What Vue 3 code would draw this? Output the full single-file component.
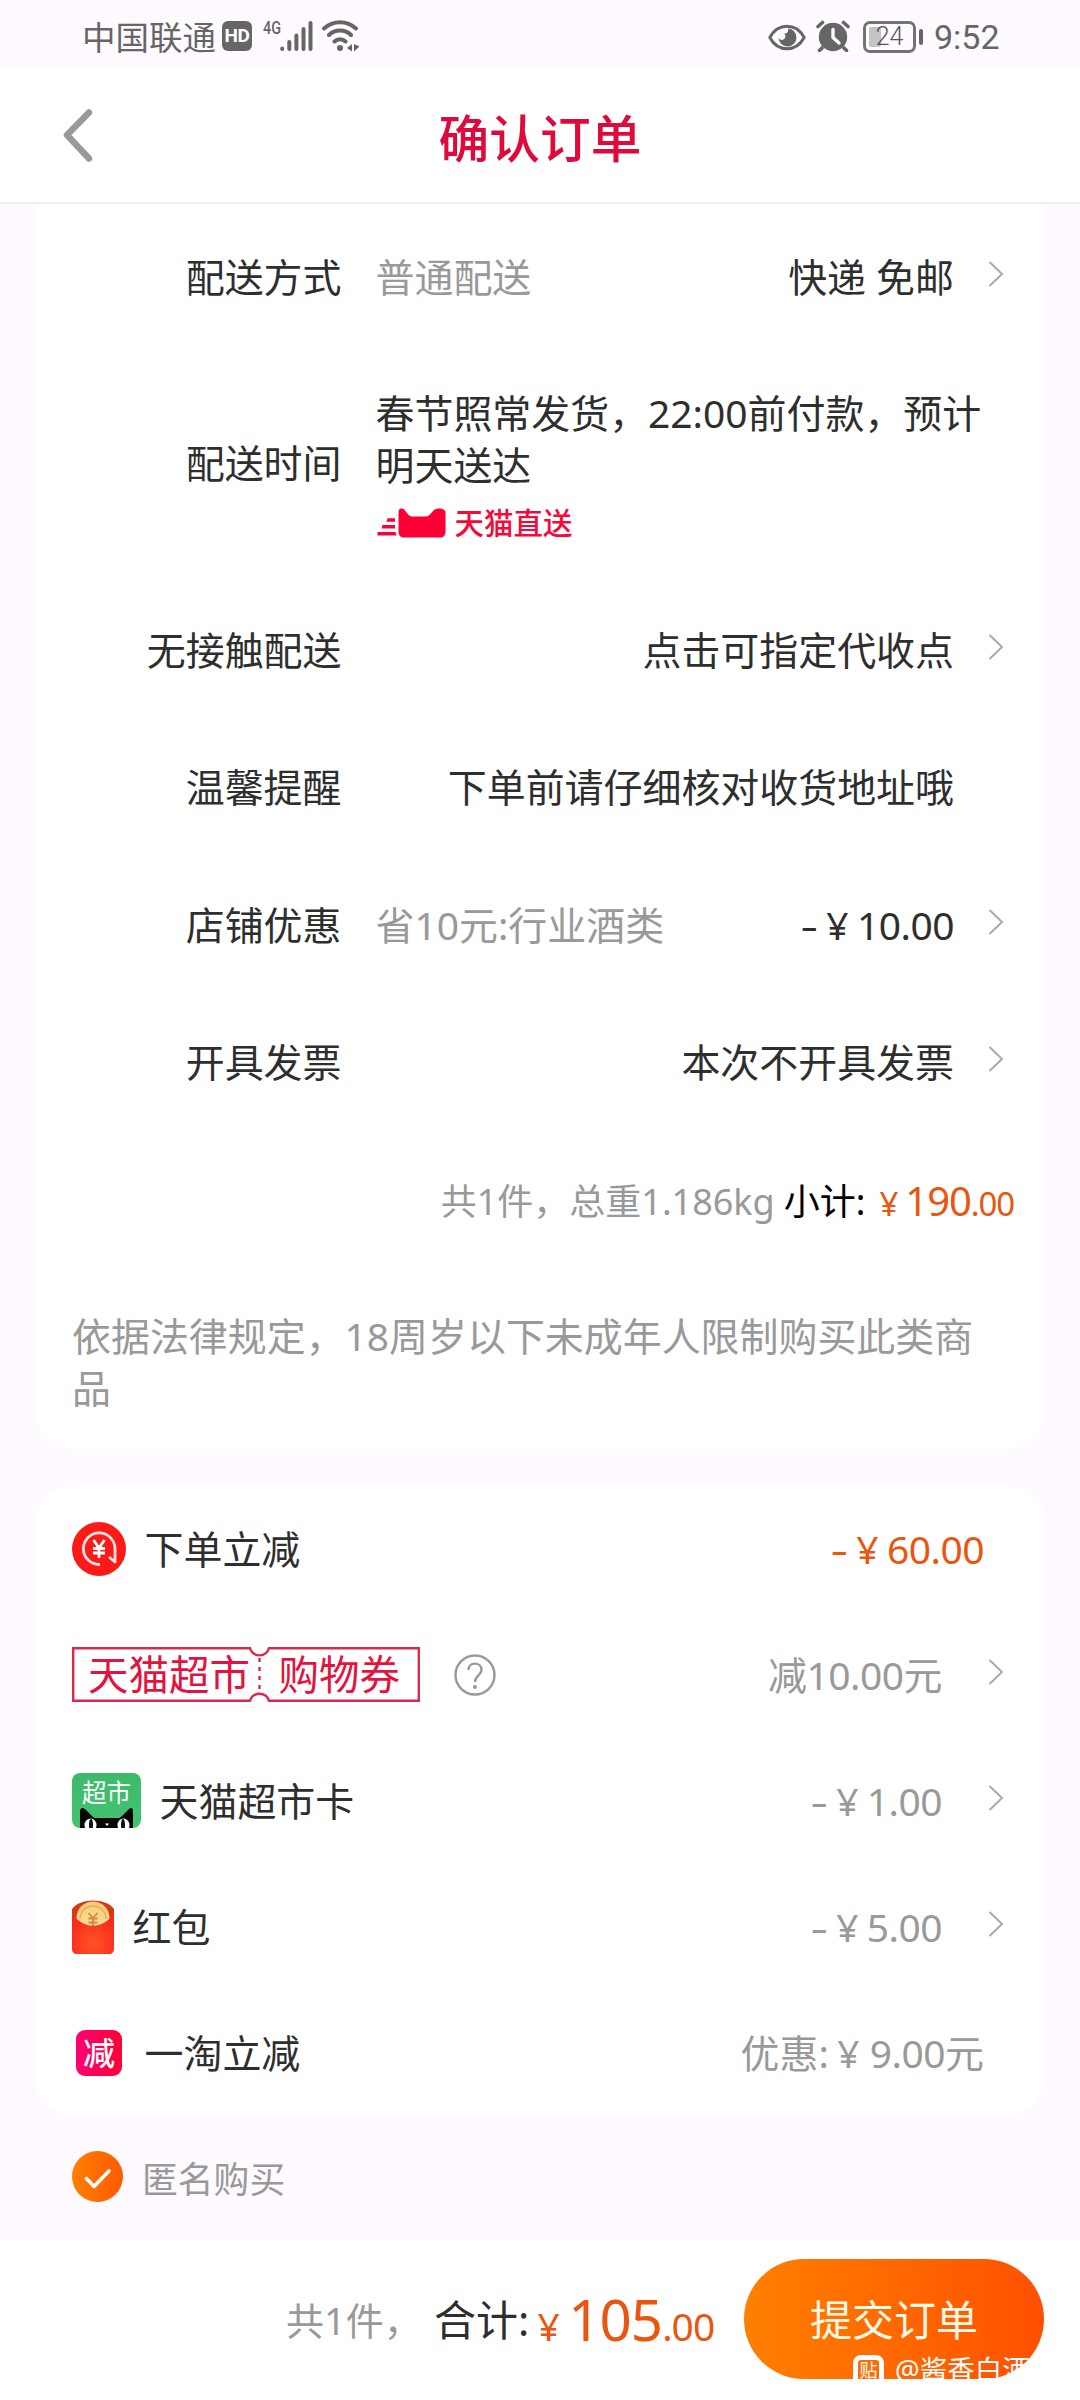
<script setup>
const delivery = [
  { label: '配送方式', hint: '普通配送', value: '快递 免邮', arrow: true },
  { label: '配送时间', slot: 'time' },
  { label: '无接触配送', value: '点击可指定代收点', arrow: true },
  { label: '温馨提醒', value: '下单前请仔细核对收货地址哦', arrow: false },
  { label: '店铺优惠', hint: '省10元:行业酒类', minus: true, amount: '10.00', arrow: true },
  { label: '开具发票', value: '本次不开具发票', arrow: true },
]
const discounts = [
  { icon: 'cash', label: '下单立减', minus: true, amount: '60.00', hot: true },
  { icon: 'coupon', label: '', value: '减10.00元', arrow: true },
  { icon: 'market', label: '天猫超市卡', minus: true, amount: '1.00', arrow: true },
  { icon: 'packet', label: '红包', minus: true, amount: '5.00', arrow: true },
  { icon: 'cut', label: '一淘立减', prefix: '优惠:', amount: '9.00', suffix: '元' },
]
</script>

<template>
  <div class="page">
    <div class="status">
      <span class="carrier">中国联通</span>
      <span class="hd">HD</span>
      <span class="net">4G</span>
      <svg class="signal" width="33" height="32" viewBox="0 0 33 32" stroke="#666" stroke-width="4" stroke-linecap="round">
        <path d="M2.2 28.5v.5M9.3 22v7M16.4 15.500v13.500M23.500 9v20M30.500 3v26" />
      </svg>
      <svg class="wifi" width="38" height="32" viewBox="0 0 38 32" fill="none" stroke="#666" stroke-width="4" stroke-linecap="round">
        <path d="M2 8.500C11 0 25 0 34 8.500M7 15c6-6 16-6 22 0M12.500 21.500c3-3 8-3 11 0" />
        <circle cx="18" cy="28" r="3" fill="#666" stroke="none" />
        <path d="M30 24v7.500l-5-3.500zM32 24v7.500l5.500-5z" fill="#666" stroke="none" />
      </svg>
      <span class="spacer"></span>
      <svg class="eye" width="38" height="27" viewBox="0 0 38 27">
        <path d="M1.800 13.500C10-1.500 28-1.500 36.200 13.500 28 28.500 10 28.500 1.800 13.500z" fill="none" stroke="#666" stroke-width="3" stroke-linejoin="round" />
        <path d="M20 4.500a9 9 0 1 1-9.500 9.500c1.500 2.500 5 2.500 6.500 0 1-2 .2-3.500-1-4.500 3 .5 5-2 4-5z" fill="#666" />
      </svg>
      <svg class="alarm" width="34" height="32" viewBox="0 0 34 32">
        <circle cx="17" cy="17" r="14.200" fill="#666" />
        <path d="M2 6.500l4.500-4M32 6.500l-4.500-4M6 28l-2.500 2.500M28 28l2.500 2.500" stroke="#666" stroke-width="3.600" stroke-linecap="round" />
        <path d="M17 9.500v8l6 5.500" fill="none" stroke="#fff" stroke-width="3.400" stroke-linecap="round" stroke-linejoin="round" />
      </svg>
      <span class="battery"><i></i><b>24</b></span>
      <span class="nub"></span>
      <span class="clock">9:52</span>
    </div>

    <div class="header">
      <svg class="back" width="36" height="60" viewBox="0 0 36 60" fill="none" stroke="#999" stroke-width="6.500" stroke-linecap="round" stroke-linejoin="round">
        <path d="M29 7.500L7 30l22 23.500" />
      </svg>
      <h1>确认订单</h1>
    </div>

    <main class="body">
      <section class="card order">
        <div v-for="r in delivery" :key="r.label" class="row" :class="{ tall: r.slot }">
          <span class="label">{{ r.label }}</span>
          <div v-if="r.slot" class="time">
            <p>春节照常发货，22:00前付款，预计明天送达</p>
            <div class="direct">
              <svg width="70" height="30" viewBox="0 0 70 30" fill="#ff0036">
                <path d="M22.500 4C22.500 0 27-.5 29 2.500l3.500 4.500c1.500 1.500 3 1.500 5 1.500h11c2 0 4 0 5-1.500l4-4.500c2-3 12-3 12 2v19c0 4-2 6-6 6H28.500c-4 0-6-2-6-6z" />
                <path d="M11.500 10.200h7.500v3.600h-8.500zM6.500 17H19v3.600H5.500zM1.500 24h18l1 3.600h-19z" />
              </svg>
              <span>天猫直送</span>
            </div>
          </div>
          <template v-else>
            <span class="hint">{{ r.hint }}</span>
            <span class="value"><template v-if="r.amount"><span class="minus">-</span><span class="yen">¥</span><span class="num">{{ r.amount }}</span></template><template v-else>{{ r.value }}</template></span>
            <svg class="arrow" width="16" height="28" viewBox="0 0 16 28" fill="none" stroke="#aaa" stroke-width="2">
              <path v-if="r.arrow" d="M1.500 2L14 14 1.500 26" />
            </svg>
          </template>
        </div>
        <div class="summary">
          <span class="gray">共1件，总重1.186kg</span>
          <span class="sub">小计:</span>
          <span class="price"><span class="yen">¥</span><b>190</b>.00</span>
        </div>
        <p class="notice">依据法律规定，18周岁以下未成年人限制购买此类商品</p>
      </section>

      <section class="card">
        <div v-for="d in discounts" :key="d.icon" class="drow">
          <div class="icon">
            <svg v-if="d.icon === 'cash'" width="54" height="54" viewBox="0 0 54 54">
              <circle cx="27" cy="27" r="27" fill="#fb1a18" />
              <path d="M28 42.500A15.800 15.800 0 1 1 43 27v13l-6-5" fill="none" stroke="#fff" stroke-opacity=".88" stroke-width="2.800" stroke-linejoin="round" />
              <path d="M21.500 18l5.500 8 5.500-8M27 26v10M21 26.500h12M21 31h12" fill="none" stroke="#fff" stroke-width="2.800" />
            </svg>
            <div v-else-if="d.icon === 'coupon'" class="coupon">
              <svg width="348" height="55" viewBox="0 0 348 55" fill="none" stroke="#d92a4c" stroke-width="2.400">
                <path d="M1.200 1.200H178c3 9.500 16 9.500 19 0h149.800v52.600H197c-3-9.500-16-9.500-19 0H1.200z" />
                <path d="M187.500 11v34" stroke-dasharray="4 5" />
              </svg>
              <span class="c1">天猫超市</span>
              <span class="c2">购物券</span>
            </div>
            <div v-else-if="d.icon === 'market'" class="market">
              <span>超市</span>
              <svg width="54" height="20" viewBox="0 0 54 20">
                <path d="M0 20V4C0-1 3-1 6 2l6 6c2 2 3 2 5 2h20c2 0 3 0 5-2l6-6c3-3 5-3 5 2v16z" fill="#060606" />
                <ellipse cx="10.500" cy="17" rx="6" ry="6.500" fill="#fff" />
                <ellipse cx="43.500" cy="17" rx="6" ry="6.500" fill="#fff" />
                <ellipse cx="11" cy="17" rx="2" ry="6.300" fill="#111" />
                <ellipse cx="43" cy="17" rx="2" ry="6.300" fill="#111" />
                <path d="M25 15.500h4l-2 2.500z" fill="#fff" />
              </svg>
            </div>
            <svg v-else-if="d.icon === 'packet'" width="42" height="54" viewBox="0 0 42 54">
              <defs>
                <radialGradient id="red" cx=".5" cy=".75" r=".65"><stop offset="0" stop-color="#ff5426" /><stop offset="1" stop-color="#f72a1c" /></radialGradient>
                <linearGradient id="gold" x1="0" y1="0" x2="0" y2="1"><stop offset="0" stop-color="#f9c978" /><stop offset="1" stop-color="#ffe2a0" /></linearGradient>
              </defs>
              <path d="M0 28V9C8-2.500 34-2.500 42 9v19z" fill="#d23a16" />
              <circle cx="21" cy="18" r="16.500" fill="url(#gold)" />
              <path d="M8 19a13 13 0 0 1 26 0" fill="none" stroke="#e8a950" stroke-width="1.300" />
              <path d="M16.500 13l4.500 5 4.500-5M21 18v8M16.500 18.500h9M16.500 22.500h9" fill="none" stroke="#cf8a3a" stroke-width="1.800" />
              <path d="M0 11c7 19.500 35 19.500 42 0v38c0 3-2 5-5 5H5c-3 0-5-2-5-5z" fill="url(#red)" />
            </svg>
            <span v-else class="cut">减</span>
          </div>

          <span v-if="d.label" class="dlabel">{{ d.label }}</span>
          <svg v-else class="help" width="44" height="44" viewBox="0 0 44 44" fill="none" stroke="#999" stroke-width="2.400">
            <circle cx="22" cy="22" r="19.500" />
            <path d="M15.500 17c0-8.500 13-8.500 13 0 0 5-6.500 5.500-6.500 12" />
            <circle cx="22" cy="34" r="2" fill="#999" stroke="none" />
          </svg>
          <span class="dvalue" :class="{ hot: d.hot, linked: d.arrow }"><template v-if="d.amount"><span v-if="d.minus" class="minus">-</span>{{ d.prefix }}<span class="yen">¥</span><span class="num">{{ d.amount }}</span>{{ d.suffix }}</template><span v-else class="num">{{ d.value }}</span></span>
          <svg v-if="d.arrow" class="arrow" width="16" height="28" viewBox="0 0 16 28" fill="none" stroke="#aaa" stroke-width="2">
            <path d="M1.500 2L14 14 1.500 26" />
          </svg>
        </div>
      </section>

      <div class="anon">
        <svg width="51" height="51" viewBox="0 0 51 51">
          <defs><linearGradient id="tick" x1="0" x2="1"><stop offset="0" stop-color="#ff7f00" /><stop offset="1" stop-color="#ff5a00" /></linearGradient></defs>
          <circle cx="25.500" cy="25.500" r="25.500" fill="url(#tick)" />
          <path d="M14.500 27.500l7.500 8 15-15.500" fill="none" stroke="#fff" stroke-width="3.600" stroke-linecap="round" stroke-linejoin="round" />
        </svg>
        <span>匿名购买</span>
      </div>
    </main>

    <footer class="bar">
      <span class="count">共1件，</span>
      <span class="total">合计:</span>
      <span class="pay"><span class="yen">¥</span><b>105</b>.00</span>
      <div class="submit">提交订单</div>
      <div class="mark">
        <span class="tie">贴</span>
        <span>@酱香白酒</span>
      </div>
    </footer>
  </div>
</template>

<style>
body { background: #fff; }
</style>

<style scoped>
.page {
  width: 1080px;
  height: 2400px;
  overflow: hidden;
  display: flex;
  flex-direction: column;
  background: #fff;
  font-family: "Noto Sans", "Noto Sans CJK SC", sans-serif;
  font-size: 38.950px;
  line-height: 52px;
  color: #2e2e2e;
}
p, h1 { margin: 0; }
b { font-weight: 400; }
svg { display: block; flex: none; }

.status {
  flex: none;
  height: 70px;
  box-sizing: border-box;
  padding: 4px 81px 0 82px;
  display: flex;
  align-items: flex-start;
  background: #fefaff;
  color: #666;
}
.carrier { font-size: 33.500px; line-height: 66px; width: 140px; white-space: nowrap; }
.hd {
  margin-top: 17px;
  width: 30px;
  height: 30px;
  border-radius: 6px;
  background: #666;
  color: #fff;
  font: 700 19px/30px Roboto, sans-serif;
  text-align: center;
  letter-spacing: -0.5px;
}
.net { margin: 15px 0 0 11px; width: 17px; font: 500 19px/18px Roboto, sans-serif; transform: scaleX(.76); transform-origin: 0 0; }
.signal { margin-top: 16px; }
.wifi { margin: 16px 0 0 9px; }
.spacer { flex: 1; }
.eye { margin-top: 19.500px; }
.alarm { margin: 16px 0 0 10px; }
.battery {
  margin: 17px 0 0 13px;
  width: 53px;
  height: 32px;
  box-sizing: border-box;
  border: 3px solid #737373;
  border-radius: 7px;
  display: flex;
  position: relative;
}
.battery i { width: 12px; margin: 3px; background: #c4c4c4; border-radius: 2px; }
.battery b { position: absolute; inset: 0; font: 300 25px/26px Roboto, sans-serif; text-align: center; color: #555; }
.nub { margin: 25px 0 0 3px; width: 4px; height: 16px; border-radius: 2px; background: #666; }
.clock { margin-left: 11px; width: 65px; font: 400 34px/67px Roboto, sans-serif; white-space: nowrap; }

.header {
  flex: none;
  height: 134px;
  box-sizing: border-box;
  border-bottom: 2px solid #f3f0f3;
  display: grid;
  grid-template-columns: 60px 1fr 60px;
  padding: 0 60px;
}
.back { margin-top: 35px; }
h1 { margin-top: 34px; font-size: 50.700px; line-height: 70px; font-weight: 500; color: #e0093b; text-align: center; }

.body { flex: none; height: 2036px; padding: 0 36px; background: #fefaff; }
.card { background: #fff; border-radius: 36px; }
.order { border-radius: 0 0 36px 36px; height: 1245px; box-sizing: border-box; padding-top: 4px; margin-bottom: 37px; }
.row { display: flex; align-items: center; height: 137.300px; padding-right: 40px; }
.row.tall { height: 236px; }
.label { width: 305.500px; text-align: right; flex: none; }
.hint { margin-left: 34px; color: #999; }
.value { flex: 1; text-align: right; white-space: nowrap; }
.arrow { margin: -6px 0 0 34px; }
.time { margin-left: 34px; width: 612px; height: 153px; }
.direct { display: flex; align-items: center; gap: 9px; margin-top: 17px; height: 30px; color: #f5083c; font-size: 29.500px; font-weight: 500; }
.yen { display: inline-block; width: 1em; text-align: center; letter-spacing: 0; }
.minus { display: inline-block; transform: scaleX(1.4); }
.minus + .yen { margin: 0 -2px 0 2px; }
.num { letter-spacing: -0.500px; margin-left: 2px; }

.summary { display: flex; justify-content: flex-end; align-items: center; height: 144px; padding-right: 30px; font-size: 36px; }
.gray { color: #999; }
.sub { color: #000; margin-left: 9px; }
.price { color: #e8560f; font-size: 33px; margin-left: 7px; letter-spacing: -1.100px; padding-top: 1px; }
.price b { font-size: 40px; }
.notice { margin: 36px 36px 0; width: 912px; color: #999; }

.drow { display: flex; align-items: center; height: 126px; padding: 0 40px 0 36px; }
.icon { flex: none; margin-top: -1px; }
.dlabel { margin-left: 18.500px; }
.dvalue { flex: 1; text-align: right; color: #999; white-space: nowrap; padding-right: 20px; }
.dvalue.hot { color: #e8560f; }
.dvalue.linked { padding-right: 12px; }
.coupon { position: relative; width: 348px; height: 55px; color: #e3123f; font-size: 40.500px; }
.coupon span { position: absolute; top: 2px; white-space: nowrap; }
.coupon .c1 { left: 16px; }
.coupon .c2 { left: 206.500px; }
.help { margin: -1px 0 0 33px; }
.market { width: 69px; height: 55px; border-radius: 8px; background: linear-gradient(#3db96b, #43c471); position: relative; overflow: hidden; color: #fff; text-align: center; }
.market span { display: block; font-size: 24.500px; line-height: 40px; }
.market svg { position: absolute; left: 8px; bottom: 0; }
.cut { display: block; width: 46px; height: 46px; margin: 0 4px; border-radius: 9px; background: linear-gradient(90deg, #ff0072, #ff0036); color: #fff; font-size: 32px; line-height: 46px; text-align: center; font-weight: 500; }

.anon { display: flex; align-items: center; height: 51px; margin: 35px 36px 0; gap: 19px; color: #999; font-size: 35.800px; }
.anon span { padding-top: 4px; }

.bar { flex: none; background: #fff; display: flex; align-items: center; position: relative; padding: 0 36px 2px 286px; height: 160px; box-sizing: border-box; }
.count { color: #999; width: 148px; white-space: nowrap; font-size: 38px; padding-top: 2px; }
.total { font-size: 42px; white-space: nowrap; padding-top: 2px; }
.pay { flex: 1; color: #e8560f; white-space: nowrap; letter-spacing: -1px; padding-top: 8px; }
.pay b { font-size: 56.500px; }
.submit {
  width: 300px;
  height: 120px;
  border-radius: 60px;
  background: linear-gradient(90deg, #ff8000, #ff5000);
  color: #fff8e4;
  font-size: 42px;
  line-height: 122px;
  text-align: center;
}
.mark { position: absolute; left: 853px; top: 110px; display: flex; align-items: center; gap: 11px; color: #fff; font-size: 27.500px; line-height: 40px; }
.tie { width: 21px; height: 21px; border: 5px solid #fff; border-radius: 8px; font-size: 18px; line-height: 21px; text-align: center; }
</style>
